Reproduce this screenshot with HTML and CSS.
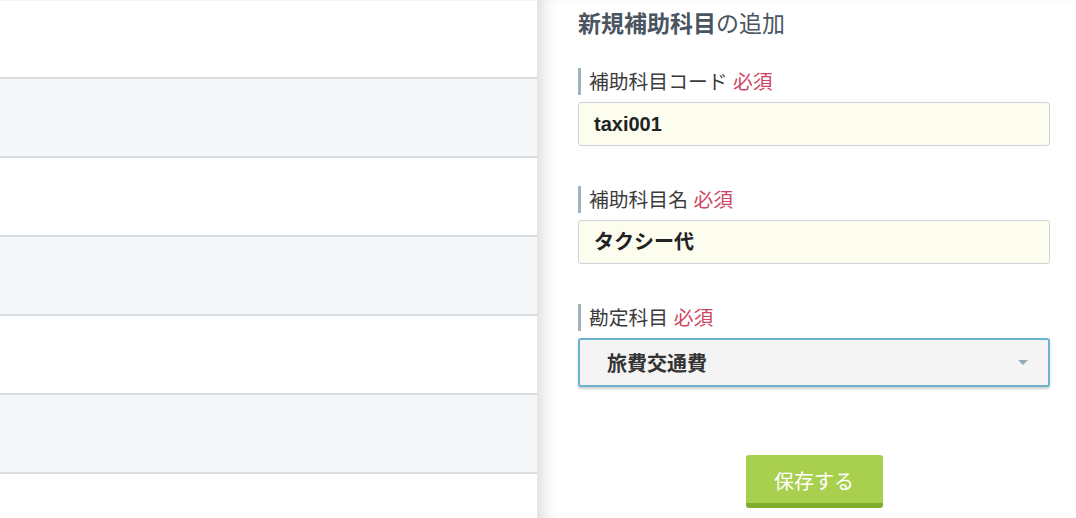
FILE: index.html
```html
<!DOCTYPE html>
<html lang="ja">
<head>
  <meta charset="UTF-8">
  <meta name="viewport" content="width=device-width, initial-scale=1.0">
  <title>新規補助科目の追加</title>
  <link rel="stylesheet" href="styles.css">
</head>
<body>
  <div class="list-pane">
    <div class="list-row"></div>
    <div class="list-row alt"></div>
    <div class="list-row"></div>
    <div class="list-row alt"></div>
    <div class="list-row"></div>
    <div class="list-row alt"></div>
    <div class="list-row last"></div>
  </div>

  <div class="form-pane">
    <h2 class="form-title"><strong>新規補助科目</strong>の追加</h2>

    <div class="field">
      <label class="field-label">補助科目コード <span class="required">必須</span></label>
      <div class="text-input">taxi001</div>
    </div>

    <div class="field">
      <label class="field-label">補助科目名 <span class="required">必須</span></label>
      <div class="text-input">タクシー代</div>
    </div>

    <div class="field">
      <label class="field-label">勘定科目 <span class="required">必須</span></label>
      <div class="select-input">
        <span>旅費交通費</span>
        <span class="caret"></span>
      </div>
    </div>

    <div class="actions">
      <button class="save-btn">保存する</button>
    </div>
  </div>
</body>
</html>
```

FILE: styles.css
```css
* {
  margin: 0;
  padding: 0;
  box-sizing: border-box;
}
body {
  font-family: 'Liberation Sans', 'Noto Sans CJK JP', sans-serif;
  background: #fff;
  display: flex;
  height: 100vh;
  overflow: hidden;
}

/* left list */
.list-pane {
  width: 537px;
  flex-shrink: 0;
  display: flex;
  flex-direction: column;
  border-top: 1px solid #f1f3f4;
  overflow: hidden;
}
.list-row {
  height: 79px;
  flex-shrink: 0;
  background: #fff;
  border-bottom: 2px solid #d7dde0;
}
.list-row:first-child {
  height: 78px;
}
.list-row.alt {
  background: #f6f7f9;
}
.list-row.last {
  flex: 1;
  border-bottom: none;
}

/* right form */
.form-pane {
  flex: 1;
  padding: 9px 26px 0 41px;
  box-shadow: inset 14px 0 16px -9px rgba(0,0,0,0.15);
}
.form-title {
  font-size: 23px;
  line-height: 30px;
  font-weight: normal;
  color: #4a5561;
  margin-bottom: 29px;
}
.form-title strong {
  font-weight: bold;
}
.field {
  margin-bottom: 40px;
}
.field-label {
  display: block;
  height: 27px;
  line-height: 28px;
  border-left: 3px solid #9fb3bf;
  padding-left: 8px;
  font-size: 19.8px;
  color: #3b3b3b;
  margin-bottom: 7px;
}
.required {
  color: #cf4562;
}
.text-input {
  height: 44px;
  line-height: 42px;
  background: #fcfdef;
  border: 1px solid #cdd4d8;
  border-radius: 3px;
  padding-left: 15px;
  font-size: 20px;
  font-weight: bold;
  color: #222;
}
.select-input {
  height: 49px;
  background: #f4f4f4;
  border: 2px solid #6db2d1;
  border-radius: 3px;
  box-shadow: 0 2px 2px rgba(0,0,0,0.18);
  padding: 0 20px 0 27px;
  display: flex;
  align-items: center;
  justify-content: space-between;
  font-size: 20px;
  font-weight: bold;
  color: #333;
}
.caret {
  width: 0;
  height: 0;
  border-left: 5px solid transparent;
  border-right: 5px solid transparent;
  border-top: 5px solid #92a9b8;
}
.actions {
  display: flex;
  justify-content: center;
  margin-top: 68px;
}
.save-btn {
  width: 137px;
  height: 53px;
  background: #a8cf4e;
  border: none;
  border-bottom: 5px solid #80ad2b;
  border-radius: 3px;
  color: #fff;
  font-family: inherit;
  font-size: 20px;
  padding-top: 2px;
}
```
